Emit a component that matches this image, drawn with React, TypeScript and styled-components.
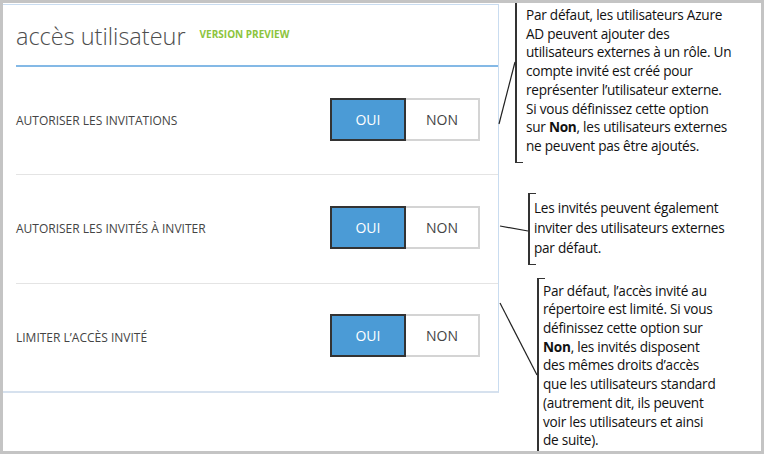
import styled, { createGlobalStyle } from 'styled-components';

const GlobalStyle = createGlobalStyle`
	body {
		margin: 0;
		background: #fff;
		font-family: "Open Sans", "Noto Sans", sans-serif;
	}
`

const Frame = styled.div`
	position: relative;
	width: 764px;
	height: 454px;
	box-sizing: border-box;
	border: 3px solid #c4c4c4;
	background: #fff;
	display: flex;
`

const Panel = styled.div`
	width: 496px;
	height: 389px;
	margin-top: 1px;
	box-sizing: border-box;
	border-top: 1px solid #c9dcf0;
	border-right: 1px solid #c9dcf0;
	border-bottom: 2px solid #d6e1ee;
	display: flex;
	flex-direction: column;
`

const Header = styled.div`
	height: 62px;
	flex: none;
	margin-left: 13px;
	box-sizing: border-box;
	border-bottom: 2px solid #84b9e6;
	display: flex;
	align-items: baseline;
	gap: 14px;
	padding-top: 16px;
`

const Title = styled.h1`
	margin: 0;
	font-size: 23.5px;
	font-weight: 300;
	color: #4d4d4d;
	line-height: 30px;
`

const Preview = styled.span`
	font-size: 10px;
	font-weight: 700;
	color: #8cc43c;
	position: relative;
	top: -7px;
`

const Row = styled.div`
	flex: 1;
	margin-left: 13px;
	padding-right: 18px;
	border-bottom: 1px solid #e4e4e4;
	display: flex;
	align-items: center;
	justify-content: space-between;

	&:last-child {
		border-bottom: none;
	}
`

const Label = styled.span`
	font-size: 12px;
	color: #444;
	text-transform: uppercase;
`

const Toggle = styled.div`
	display: flex;
	margin-top: -3px;
`

const Seg = styled.div<{ $on?: boolean }>`
	height: 43px;
	width: ${p => p.$on ? '76px' : '74px'};
	box-sizing: border-box;
	display: flex;
	align-items: center;
	justify-content: center;
	font-size: 14px;
	background: ${p => p.$on ? '#4b9bd6' : '#fff'};
	color: ${p => p.$on ? '#fff' : '#444'};
	border: 2px solid ${p => p.$on ? '#333' : '#d4d4d4'};
	${p => !p.$on && `border-left: none;`}
`

const Notes = styled.div`
	flex: 1;
	display: flex;
	flex-direction: column;
`

// bracket callouts
const Note = styled.div<{ $left: number; $top: number; $pad: number; $padTop: number; $padBottom: number; $lh?: number; $topTick?: boolean; $bottomTick?: boolean; $fill?: boolean }>`
	position: relative;
	margin-left: ${p => p.$left}px;
	margin-top: ${p => p.$top}px;
	padding: ${p => p.$padTop}px 0 ${p => p.$padBottom}px ${p => p.$pad}px;
	border-left: 2px solid #333;
	font-family: "Open Sans", "Noto Sans", sans-serif;
	font-size: 13.6px;
	letter-spacing: -0.25px;
	line-height: ${p => p.$lh || 18.7}px;
	color: #111;
	${p => p.$fill && `flex: 1;`}

	${p => p.$topTick && `
		&::before {
			content: '';
			position: absolute;
			left: 0;
			top: 0;
			width: 6px;
			border-top: 1px solid #333;
		}
	`}
	${p => p.$bottomTick && `
		&::after {
			content: '';
			position: absolute;
			left: 0;
			bottom: 0;
			width: 6px;
			border-top: 1px solid #333;
		}
	`}

	b {
		font-weight: 700;
	}
`

const Line = styled.span`
	display: block;
	white-space: nowrap;
`

const Leaders = styled.svg`
	position: absolute;
	top: -3px;
	left: -3px;
	pointer-events: none;
`

const rows = ['Autoriser les invitations', 'Autoriser les invités à inviter', 'Limiter l’accès invité'];

export default function App() {
	return (
		<>
			<GlobalStyle />
			<Frame>
				<Panel>
					<Header>
						<Title>accès utilisateur</Title>
						<Preview>VERSION PREVIEW</Preview>
					</Header>
					{rows.map(r => (
						<Row key={r}>
							<Label>{r}</Label>
							<Toggle>
								<Seg $on>OUI</Seg>
								<Seg>NON</Seg>
							</Toggle>
						</Row>
					))}
				</Panel>
				<Notes>
					<Note $left={16} $top={0} $pad={9} $padTop={3} $padBottom={7} $bottomTick>
						<Line>Par défaut, les utilisateurs Azure</Line>
						<Line>AD peuvent ajouter des</Line>
						<Line>utilisateurs externes à un rôle. Un</Line>
						<Line>compte invité est créé pour</Line>
						<Line>représenter l’utilisateur externe.</Line>
						<Line>Si vous définissez cette option</Line>
						<Line>sur <b>Non</b>, les utilisateurs externes</Line>
						<Line>ne peuvent pas être ajoutés.</Line>
					</Note>
					<Note $left={29} $top={30} $pad={4} $padTop={5} $padBottom={7} $lh={20} $topTick $bottomTick>
						<Line>Les invités peuvent également</Line>
						<Line>inviter des utilisateurs externes</Line>
						<Line>par défaut.</Line>
					</Note>
					<Note $left={38} $top={13} $pad={4} $padTop={4} $padBottom={0} $topTick $fill>
						<Line>Par défaut, l’accès invité au</Line>
						<Line>répertoire est limité. Si vous</Line>
						<Line>définissez cette option sur</Line>
						<Line><b>Non</b>, les invités disposent</Line>
						<Line>des mêmes droits d’accès</Line>
						<Line>que les utilisateurs standard</Line>
						<Line>(autrement dit, ils peuvent</Line>
						<Line>voir les utilisateurs et ainsi</Line>
						<Line>de suite).</Line>
					</Note>
				</Notes>
				<Leaders width={764} height={454}>
					<g stroke="#222" strokeWidth={1.2} fill="none">
						<line x1={499} y1={124} x2={515} y2={62} />
						<line x1={500} y1={226} x2={528} y2={231} />
						<line x1={500} y1={303} x2={537} y2={375} />
					</g>
				</Leaders>
			</Frame>
		</>
	);
}
